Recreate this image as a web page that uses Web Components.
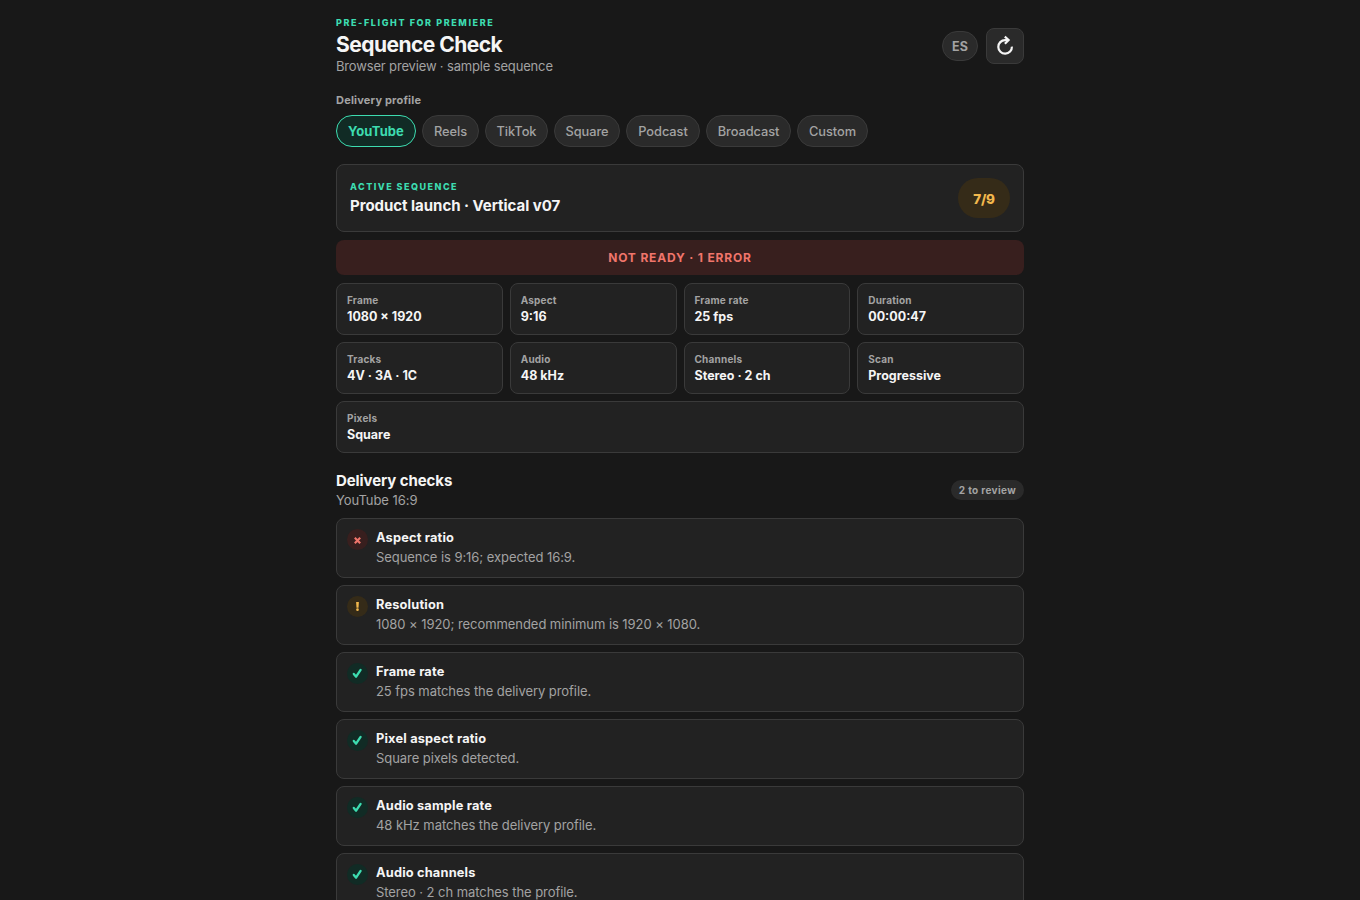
<!DOCTYPE html>
<html lang="en">
<head>
<meta charset="utf-8">
<title>Sequence Check</title>
<style>
  html {
    height: 100%;
    overflow: hidden;
  }

  body {
    --bg: #181818;
    --surface: #222222;
    --raised: #2a2a2a;
    --line: #3a3a3a;
    --text: #f5f5f5;
    --muted: #a3a3a3;
    --green: #3ddcb0;
    --green-bg: #112b25;
    --amber: #f2b84d;
    --amber-bg: #352b18;
    --red: #f0756b;
    --red-bg: #381f1e;

    height: 100%;
    margin: 0;
    overflow: hidden;
    background: var(--bg);
    color: var(--text);
    font-family: Inter, "Liberation Sans", sans-serif;
    font-size: 13px;
  }
</style>
</head>
<body>
<sequence-check></sequence-check>

<script>
// Attach an open shadow root and fill it from a template
function attach(el, html) {
  const template = document.createElement('template');
  template.innerHTML = html;
  const root = el.attachShadow({ mode: 'open' });
  root.appendChild(template.content.cloneNode(true));
  return root;
}

// Small uppercase heading
class EyebrowLabel extends HTMLElement {
  constructor() {
    super();
    attach(this, `
      <style>
        :host {
          display: block;
          color: var(--green);
          font-size: 9px;
          line-height: 12px;
          font-weight: 800;
          letter-spacing: var(--tracking, 1.6px);
          text-transform: uppercase;
          white-space: nowrap;
        }
      </style>
      <slot></slot>
    `);
  }
}

// Delivery profile pill
class ProfileChip extends HTMLElement {
  constructor() {
    super();
    attach(this, `
      <style>
        :host { display: block; }
        button {
          display: block;
          box-sizing: border-box;
          width: 100%;
          height: 32px;
          padding: 0;
          border: 1px solid var(--line);
          border-radius: 16px;
          background: var(--raised);
          color: var(--muted);
          font: 450 12.8px/31px Inter, "Liberation Sans", sans-serif;
          letter-spacing: -0.05px;
          text-align: center;
          white-space: nowrap;
          cursor: pointer;
        }
        :host([selected]) button {
          border-color: var(--green);
          background: var(--green-bg);
          color: var(--green);
          font-size: 13px;
          font-weight: 700;
          letter-spacing: 0.1px;
        }
      </style>
      <button type="button"><slot></slot></button>
    `);
  }
}

// Label and value tile
class MetricTile extends HTMLElement {
  constructor() {
    super();
    attach(this, `
      <style>
        :host {
          display: block;
          box-sizing: border-box;
          height: 52px;
          padding: 10px;
          border: 1px solid var(--line);
          border-radius: 8px;
          background: var(--surface);
        }
        :host([wide]) { grid-column: 1 / -1; }
        .label {
          color: var(--muted);
          font-size: 10px;
          line-height: 13px;
          font-weight: 650;
          letter-spacing: 0.2px;
        }
        .value {
          margin-top: 2px;
          font-size: 12.5px;
          line-height: 16px;
          font-weight: 700;
        }
      </style>
      <div class="label"><slot name="label"></slot></div>
      <div class="value"><slot></slot></div>
    `);
  }
}

// One result row, status is pass, warn or fail
class CheckRow extends HTMLElement {
  static get observedAttributes() {
    return ['status'];
  }

  constructor() {
    super();
    this.root = attach(this, `
      <style>
        :host {
          display: flex;
          gap: 8px;
          box-sizing: border-box;
          height: 60px;
          padding: 10px;
          border: 1px solid var(--line);
          border-radius: 8px;
          background: var(--surface);
        }
        .mark {
          flex: none;
          width: 21px;
          height: 21px;
          border-radius: 50%;
          background: var(--green-bg);
          color: var(--green);
        }
        :host([status="warn"]) .mark { background: var(--amber-bg); color: var(--amber); }
        :host([status="fail"]) .mark { background: var(--red-bg); color: var(--red); }
        svg { display: block; width: 21px; height: 21px; }
        .title {
          font-size: 12.8px;
          line-height: 17px;
          font-weight: 700;
          letter-spacing: 0.18px;
        }
        .detail {
          margin-top: 2px;
          color: var(--muted);
          font-size: 13px;
          line-height: 18px;
          letter-spacing: -0.06px;
        }
      </style>
      <div class="mark"></div>
      <div>
        <div class="title"><slot name="title"></slot></div>
        <div class="detail"><slot></slot></div>
      </div>
    `);
  }

  attributeChangedCallback() {
    this.render();
  }

  render() {
    const icons = {
      pass: '<path d="M6.8 10.9l2.3 2.8 4.5-6.8" fill="none" stroke="currentColor" stroke-width="2.3" stroke-linecap="round" stroke-linejoin="round"/>',
      warn: '<path d="M9.1 6h2.8l-.4 5.8h-2z" fill="currentColor"/><circle cx="10.5" cy="13.7" r="1.35" fill="currentColor"/>',
      fail: '<path d="M7.8 8.8l5.4 5.4M13.2 8.8l-5.4 5.4" fill="none" stroke="currentColor" stroke-width="2.1"/>'
    };
    this.root.querySelector('.mark').innerHTML =
      '<svg viewBox="0 0 21 21">' + (icons[this.getAttribute('status')] || '') + '</svg>';
  }
}

// Whole panel
class SequenceCheck extends HTMLElement {
  constructor() {
    super();
    attach(this, `
      <style>
        :host {
          display: block;
          width: 688px;
          margin: 0 auto;
          padding-top: 17px;
        }
        header, .tools, .chips, .active, .section {
          display: flex;
        }
        header {
          justify-content: space-between;
          align-items: center;
          height: 58px;
        }
        h1, h2, h3, p { margin: 0; }
        h1 {
          margin-top: 3px;
          font-size: 21px;
          line-height: 26px;
          font-weight: 700;
          letter-spacing: -0.54px;
        }
        p {
          color: var(--muted);
          font-size: 13px;
          line-height: 18px;
          letter-spacing: -0.06px;
        }
        header p {
          line-height: 17px;
          letter-spacing: -0.16px;
        }
        .tools {
          gap: 8px;
          align-items: center;
        }
        .tools button {
          display: grid;
          place-items: center;
          box-sizing: border-box;
          padding: 0;
          border: 1px solid var(--line);
          background: var(--raised);
          color: var(--text);
        }
        .lang {
          width: 36px;
          height: 30px;
          border-radius: 15px;
        }
        .tools .lang {
          color: var(--muted);
          font: 700 12.5px Inter, "Liberation Sans", sans-serif;
          letter-spacing: 0.2px;
        }
        .refresh {
          width: 38px;
          height: 36px;
          border-radius: 8px;
        }
        .caption {
          margin-top: 17px;
          color: var(--muted);
          font-size: 11px;
          line-height: 16px;
          font-weight: 650;
          letter-spacing: 0.19px;
        }
        .chips {
          gap: 6px;
          margin-top: 7px;
        }
        .active {
          --tracking: 1.48px;
          justify-content: space-between;
          align-items: center;
          box-sizing: border-box;
          height: 68px;
          margin-top: 17px;
          padding: 0 13px;
          border: 1px solid var(--line);
          border-radius: 8px;
          background: var(--surface);
        }
        h2 {
          margin-top: 3px;
          font-size: 15px;
          line-height: 19px;
          font-weight: 700;
          letter-spacing: -0.03px;
        }
        .score {
          width: 52px;
          height: 40px;
          border-radius: 20px;
          background: var(--amber-bg);
          color: var(--amber);
          font-size: 13.5px;
          line-height: 42px;
          font-weight: 800;
          letter-spacing: -0.3px;
          text-align: center;
        }
        .verdict {
          height: 35px;
          margin-top: 8px;
          border-radius: 8px;
          background: var(--red-bg);
          color: var(--red);
          font-size: 12px;
          line-height: 35px;
          font-weight: 750;
          letter-spacing: 0.83px;
          text-align: center;
        }
        .metrics {
          display: grid;
          grid-template-columns: repeat(4, 1fr);
          gap: 7px;
          margin-top: 8px;
        }
        .section {
          justify-content: space-between;
          align-items: center;
          margin: 18px 0 9px;
        }
        h3 {
          font-size: 15px;
          line-height: 20px;
          font-weight: 700;
          letter-spacing: -0.08px;
        }
        .count {
          height: 20px;
          padding: 0 8px;
          border-radius: 10px;
          background: var(--raised);
          color: var(--muted);
          font-size: 10px;
          line-height: 20px;
          font-weight: 700;
          letter-spacing: 0.35px;
        }
        .checks {
          display: grid;
          gap: 7px;
        }
      </style>

      <header>
        <div>
          <eyebrow-label>Pre-flight for Premiere</eyebrow-label>
          <h1>Sequence Check</h1>
          <p>Browser preview · sample sequence</p>
        </div>
        <div class="tools">
          <button class="lang" type="button">ES</button>
          <button class="refresh" type="button" aria-label="Refresh">
            <svg width="20" height="22" viewBox="0 0 20 22" fill="none" stroke="currentColor" stroke-width="2.2">
              <path d="M16.9 11.6A6.8 6.8 0 1 1 10.1 5.1h2.6"/>
              <path d="M9.8 1.6l3.8 3.4-3.7 3.7"/>
            </svg>
          </button>
        </div>
      </header>

      <div class="caption">Delivery profile</div>
      <div class="chips">
        <profile-chip selected style="width: 80px">YouTube</profile-chip>
        <profile-chip style="width: 57px">Reels</profile-chip>
        <profile-chip style="width: 63px">TikTok</profile-chip>
        <profile-chip style="width: 66px">Square</profile-chip>
        <profile-chip style="width: 74px">Podcast</profile-chip>
        <profile-chip style="width: 85px">Broadcast</profile-chip>
        <profile-chip style="width: 71px">Custom</profile-chip>
      </div>

      <div class="active">
        <div>
          <eyebrow-label>Active sequence</eyebrow-label>
          <h2>Product launch · Vertical v07</h2>
        </div>
        <div class="score">7/9</div>
      </div>
      <div class="verdict">NOT READY · 1 ERROR</div>

      <div class="metrics">
        <metric-tile><span slot="label">Frame</span>1080 × 1920</metric-tile>
        <metric-tile><span slot="label">Aspect</span>9:16</metric-tile>
        <metric-tile><span slot="label">Frame rate</span>25 fps</metric-tile>
        <metric-tile><span slot="label">Duration</span>00:00:47</metric-tile>
        <metric-tile><span slot="label">Tracks</span>4V · 3A · 1C</metric-tile>
        <metric-tile><span slot="label">Audio</span>48 kHz</metric-tile>
        <metric-tile><span slot="label">Channels</span>Stereo · 2 ch</metric-tile>
        <metric-tile><span slot="label">Scan</span>Progressive</metric-tile>
        <metric-tile wide><span slot="label">Pixels</span>Square</metric-tile>
      </div>

      <div class="section">
        <div>
          <h3>Delivery checks</h3>
          <p>YouTube 16:9</p>
        </div>
        <div class="count">2 to review</div>
      </div>

      <div class="checks">
        <check-row status="fail"><span slot="title">Aspect ratio</span>Sequence is 9:16; expected 16:9.</check-row>
        <check-row status="warn"><span slot="title">Resolution</span>1080 × 1920; recommended minimum is 1920 × 1080.</check-row>
        <check-row status="pass"><span slot="title">Frame rate</span>25 fps matches the delivery profile.</check-row>
        <check-row status="pass"><span slot="title">Pixel aspect ratio</span>Square pixels detected.</check-row>
        <check-row status="pass"><span slot="title">Audio sample rate</span>48 kHz matches the delivery profile.</check-row>
        <check-row status="pass"><span slot="title">Audio channels</span>Stereo · 2 ch matches the profile.</check-row>
      </div>
    `);
  }
}

customElements.define('eyebrow-label', EyebrowLabel);
customElements.define('profile-chip', ProfileChip);
customElements.define('metric-tile', MetricTile);
customElements.define('check-row', CheckRow);
customElements.define('sequence-check', SequenceCheck);
</script>
</body>
</html>
